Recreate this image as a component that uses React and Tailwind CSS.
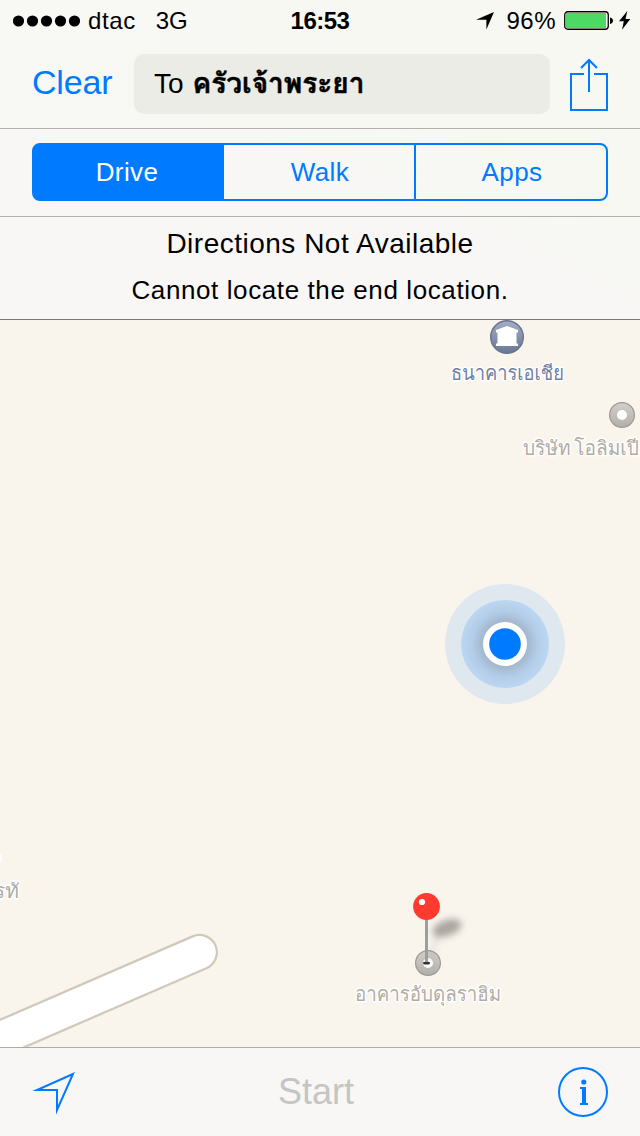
const modes = [
  { id: 'drive', label: 'Drive' },
  { id: 'walk', label: 'Walk' },
  { id: 'apps', label: 'Apps' }
]

function StatusBar() {
  return (
    <div className="grid h-10 grid-cols-3 items-center text-2xl leading-[42px]">
      <div className="flex items-center pl-[13px]">
        <svg width="68" height="12" viewBox="0 0 68 12" className="-mt-px">
          {[5.5, 19.5, 33.5, 47.5, 61.5].map((cx) => (
            <circle key={cx} cx={cx} cy="6" r="5.6" />
          ))}
        </svg>
        <span className="ml-[7px] tracking-[0.6px]">dtac</span>
        <span className="ml-[20px]">3G</span>
      </div>
      <div className="text-center font-bold tracking-[-0.5px]">16:53</div>
      <div className="flex items-center justify-end pr-[9px]">
        <svg width="18" height="18" viewBox="0 0 18 18" className="mr-[12px]">
          <path d="M18 0L10.4 17.500V7.700H0z" />
        </svg>
        <span className="tracking-[0.5px]">96%</span>
        <svg width="67" height="20" viewBox="0 0 67 20" className="ml-[8px]">
          <rect x="0.75" y="0.750" width="43.500" height="17.500" rx="3" fill="#fff" stroke="#000" strokeWidth="1.300" />
          <rect x="2" y="2" width="40" height="15" fill="#4cd964" />
          <path d="M46 6.500c4 .5 4 6 0 6.500z" />
          <path d="M63.300 0L55 10.300h4.800L58 18.800 66.300 8h-4.800z" />
        </svg>
      </div>
    </div>
  )
}

function ShareIcon() {
  return (
    <svg width="38" height="54" viewBox="0 0 38 54" fill="none" stroke="#007aff" strokeWidth="2">
      <path d="M14 16H1v36h36V16H24" />
      <path d="M19 34V2M11 10l8-8 8 8" />
    </svg>
  )
}

function ModeSwitch({ selected }) {
  return (
    <div className="flex h-[87px] px-8 pt-[14px]">
      <div className="grid h-[58px] flex-1 grid-cols-[190px_192px_190px] divide-x-2 divide-[#007aff] overflow-hidden rounded-lg border-2 border-[#007aff] bg-linear-to-r from-[#007aff] from-10% to-transparent to-10%">
        {modes.map((mode) => (
          <button
            key={mode.id}
            className={
              mode.id === selected
                ? 'bg-[#007aff] pr-[2px] pt-px text-[26px] tracking-[0.4px] text-white'
                : 'pt-px pl-[2px] text-[26px] tracking-[0.4px] text-[#007aff]'
            }
          >
            {mode.label}
          </button>
        ))}
      </div>
    </div>
  )
}

function PlaceDot({ cx, cy }) {
  return (
    <g>
      <circle cx={cx} cy={cy} r="12.400" fill="url(#grayDot)" stroke="#9d9a95" strokeWidth="1.200" />
      <circle cx={cx} cy={cy} r="5" fill="#fff" />
    </g>
  )
}

function MapLabel({ x, y, width, color, children }) {
  return (
    <text
      x={x}
      y={y}
      textLength={width}
      lengthAdjust="spacingAndGlyphs"
      fontSize="20"
      fill={color}
      stroke="#fff"
      strokeWidth="3"
      strokeLinejoin="round"
      paintOrder="stroke"
    >
      {children}
    </text>
  )
}

function MapView() {
  return (
    <svg width="640" height="727" viewBox="0 320 640 727" className="block bg-[#f9f5ed]">
      <defs>
        <linearGradient id="grayDot" x1="0" y1="0" x2="0" y2="1">
          <stop offset="0" stopColor="#d3d0ca" />
          <stop offset="1" stopColor="#b2afaa" />
        </linearGradient>
        <linearGradient id="blueDot" x1="0" y1="0" x2="0" y2="1">
          <stop offset="0" stopColor="#a3adc6" />
          <stop offset="1" stopColor="#6a7693" />
        </linearGradient>
        <radialGradient id="halo">
          <stop offset="0.500" stopColor="#a3b6cc" />
          <stop offset="0.750" stopColor="#b3cde8" />
          <stop offset="1" stopColor="#bcd7f1" />
        </radialGradient>
        <filter id="soft" x="-50%" y="-50%" width="200%" height="200%">
          <feGaussianBlur stdDeviation="3.500" />
        </filter>
      </defs>

      {/* Road */}
      <g strokeLinecap="round">
        <path d="M199.500 952.300L-60 1064.800" stroke="#d1c8bc" strokeWidth="37" />
        <path d="M199.500 952.300L-60 1064.800" stroke="#fff" strokeWidth="32.500" />
      </g>

      {/* Bank */}
      <circle cx="507" cy="337" r="16.300" fill="url(#blueDot)" stroke="#68738f" strokeWidth="1.400" />
      <path d="M507 326l11 4v2.500h-1.500v11h1.500v2.500h-22v-2.500h1.500v-11h-1.500v-2.500z" fill="#fff" />
      <MapLabel x={451} y={380} width={113} color="#7080a2">ธนาคารเอเชีย</MapLabel>

      <PlaceDot cx={622} cy={415} />
      <MapLabel x={523} y={455} width={127} color="#b0aca5">บริษัท{'\u2009'}โอลิมเปีย</MapLabel>

      <circle cx="-4" cy="858" r="6" fill="#fff" />
      <MapLabel x={-6} y={898} width={25} color="#b0aca5">รทั</MapLabel>

      {/* User location */}
      <circle cx="505" cy="644" r="60" fill="#dfe8ef" />
      <circle cx="505" cy="644" r="44" fill="url(#halo)" />
      <circle cx="505" cy="644" r="22" fill="#fff" />
      <circle cx="505" cy="644" r="15.800" fill="#007aff" />

      {/* Dropped pin */}
      <PlaceDot cx={428} cy={963} />
      <g filter="url(#soft)" fill="#77736c">
        <ellipse cx="447" cy="928" rx="15" ry="8" opacity="0.600" transform="rotate(-18 447 928)" />
        <path d="M428 962l12-32" stroke="#77736c" strokeWidth="3" opacity="0.250" />
      </g>
      <ellipse cx="426.500" cy="963" rx="3.500" ry="1.500" fill="#333" />
      <path d="M426.500 916v46" stroke="#9b9fa4" strokeWidth="3" />
      <circle cx="426.500" cy="906.500" r="13.400" fill="#ff3b30" />
      <circle cx="422" cy="902" r="3.100" fill="#fff" />
      <MapLabel x={355} y={1001} width={146} color="#b0aca5">อาคารอับดุลราฮิม</MapLabel>
    </svg>
  )
}

function Toolbar() {
  return (
    <div className="flex h-[89px] items-center justify-between border-t border-[#aeaaa6] bg-[#f8f7f6] px-8">
      <svg width="50" height="46" viewBox="0 0 50 46" fill="none" stroke="#007aff" strokeWidth="2" strokeMiterlimit="10">
        <path d="M41 5L5 21H25V41z" />
      </svg>
      <button className="mr-2 text-[36px] text-[#c5c5c4]">Start</button>
      <svg width="50" height="50" viewBox="0 0 50 50">
        <circle cx="25" cy="25" r="24" fill="none" stroke="#007aff" strokeWidth="2" />
        <circle cx="25.800" cy="15" r="2.600" fill="#007aff" />
        <path d="M22 20h6v16h2v2h-8v-2h2V22h-2z" fill="#007aff" />
      </svg>
    </div>
  )
}

export default function App() {
  return (
    <div className="flex h-[1136px] w-[640px] flex-col overflow-hidden bg-[#f8f7f5] font-['Liberation_Sans','Thonburi','Loma','Garuda','Waree','Noto_Sans_Thai_Looped','Noto_Sans_Thai',sans-serif] text-black">
      <div className="bg-linear-to-tr from-[#f8f7f6] from-45% to-[#f7f8f1] to-75%">
        <div className="bg-linear-to-r from-[#f8f8f4] to-[#f7f8f2]">
          <StatusBar />
          <div className="flex h-[89px] border-b border-[#b0b0ac] pt-[14px] pr-8 pl-8">
            <button className="h-[56px] w-[102px] text-left text-[34px] tracking-[-0.2px] text-[#007aff]">Clear</button>
            <div className="flex h-[60px] w-[416px] items-center rounded-[10px] bg-[#ecece6] pl-5 text-[28px]">
              <span>To</span>
              <span className="ml-[9px] font-bold whitespace-nowrap [-webkit-text-stroke:0.5px_#000]">ครัวเจ้าพระยา</span>
            </div>
            <button className="mt-1 ml-5 flex h-[54px] items-center">
              <ShareIcon />
            </button>
          </div>
        </div>
        <ModeSwitch selected="drive" />
        <div className="h-[104px] border-y border-[#b0b0ac] border-b-[#7b7875] text-center">
          <h1 className="pt-1.5 text-[28px] leading-[42px] tracking-[0.5px]">Directions Not Available</h1>
          <p className="text-[26px] leading-[51px] tracking-[0.6px]">Cannot locate the end location.</p>
        </div>
      </div>
      <MapView />
      <Toolbar />
    </div>
  )
}
